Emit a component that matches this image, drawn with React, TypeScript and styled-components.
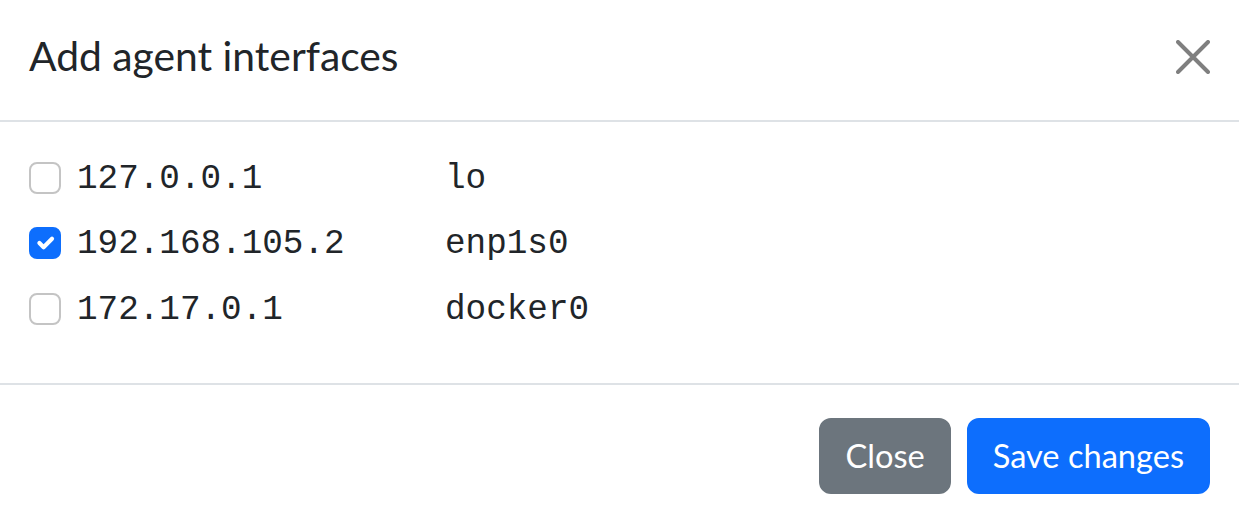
import React, { useState } from "react";
import styled, { createGlobalStyle } from "styled-components";

const GlobalStyle = createGlobalStyle`
  html, body { margin: 0; padding: 0; background: #fff; }
  body { font-family: Lato, "Noto Sans", sans-serif; color: #212529; }
  * { box-sizing: border-box; }
`;

const Modal = styled.div`
  width: 1239px;
  height: 522px;
  display: flex;
  flex-direction: column;
  background: #fff;
  overflow: hidden;
`;

const Header = styled.div`
  height: 122px;
  padding: 0 29px;
  display: flex;
  align-items: center;
  justify-content: space-between;
  border-bottom: 2px solid #dee2e6;
`;

const Title = styled.h5`
  margin: 0;
  margin-top: -9px;
  font-family: Lato, sans-serif;
  font-weight: 400;
  font-size: 40.8px;
  line-height: 1.5;
  color: #212529;
`;

const CloseX = styled.button`
  width: 34px;
  height: 34px;
  padding: 0;
  margin-top: -6px;
  border: 0;
  background: transparent;
  display: flex;
  align-items: center;
  justify-content: center;
  cursor: pointer;
`;

const Body = styled.div`
  padding: 23px 29px 0;
  flex: 0 0 263px;
  border-bottom: 2px solid #dee2e6;
`;

const Row = styled.label`
  height: 65.5px;
  display: grid;
  grid-template-columns: 32px 352px auto;
  column-gap: 16px;
  align-items: center;
  font-family: "Liberation Mono", monospace;
  font-size: 34.3px;
  color: #212529;
  cursor: pointer;
`;

const Box = styled.span<{ $checked: boolean }>`
  width: 32px;
  height: 32px;
  border-radius: 8px;
  border: 2px solid ${(p) => (p.$checked ? "#0d6efd" : "#c4c4c4")};
  background: ${(p) => (p.$checked ? "#0d6efd" : "#fff")};
  display: flex;
  align-items: center;
  justify-content: center;
`;

const Cell = styled.span`
  white-space: pre;
  line-height: 1;
  margin-top: 2px;
`;

const Footer = styled.div`
  flex: 1;
  padding: 33px 29px 0;
  display: flex;
  justify-content: flex-end;
  align-items: flex-start;
  gap: 16px;
`;

const Button = styled.button<{ $variant: "secondary" | "primary" }>`
  height: 76px;
  padding: 0 24px;
  border-radius: 12px;
  border: 2px solid ${(p) => (p.$variant === "primary" ? "#0d6efd" : "#6c757d")};
  background: ${(p) => (p.$variant === "primary" ? "#0d6efd" : "#6c757d")};
  color: #fff;
  font-family: Lato, sans-serif;
  font-size: 32.6px;
  line-height: 48px;
  cursor: pointer;
`;

const interfaces = [
  { ip: "127.0.0.1", name: "lo", checked: false },
  { ip: "192.168.105.2", name: "enp1s0", checked: true },
  { ip: "172.17.0.1", name: "docker0", checked: false },
];

export default function App() {
  const [items, setItems] = useState(interfaces);
  return (
    <>
      <GlobalStyle />
      <Modal>
        <Header>
          <Title>Add agent interfaces</Title>
          <CloseX aria-label="Close">
            <svg width="34" height="34" viewBox="0 0 34 34">
              <path d="M2 2 L32 32 M32 2 L2 32" stroke="#7f7f7f" strokeWidth="4" strokeLinecap="round" />
            </svg>
          </CloseX>
        </Header>
        <Body>
          {items.map((it, i) => (
            <Row
              key={it.ip}
              onClick={() =>
                setItems(items.map((x, j) => (j === i ? { ...x, checked: !x.checked } : x)))
              }
            >
              <Box $checked={it.checked}>
                {it.checked && (
                  <svg width="28" height="28" viewBox="0 0 20 20">
                    <path d="M6 10 L9 13 L15 7" fill="none" stroke="#fff" strokeWidth="3" strokeLinecap="round" strokeLinejoin="round" />
                  </svg>
                )}
              </Box>
              <Cell>{it.ip}</Cell>
              <Cell>{it.name}</Cell>
            </Row>
          ))}
        </Body>
        <Footer>
          <Button $variant="secondary">Close</Button>
          <Button $variant="primary">Save changes</Button>
        </Footer>
      </Modal>
    </>
  );
}
